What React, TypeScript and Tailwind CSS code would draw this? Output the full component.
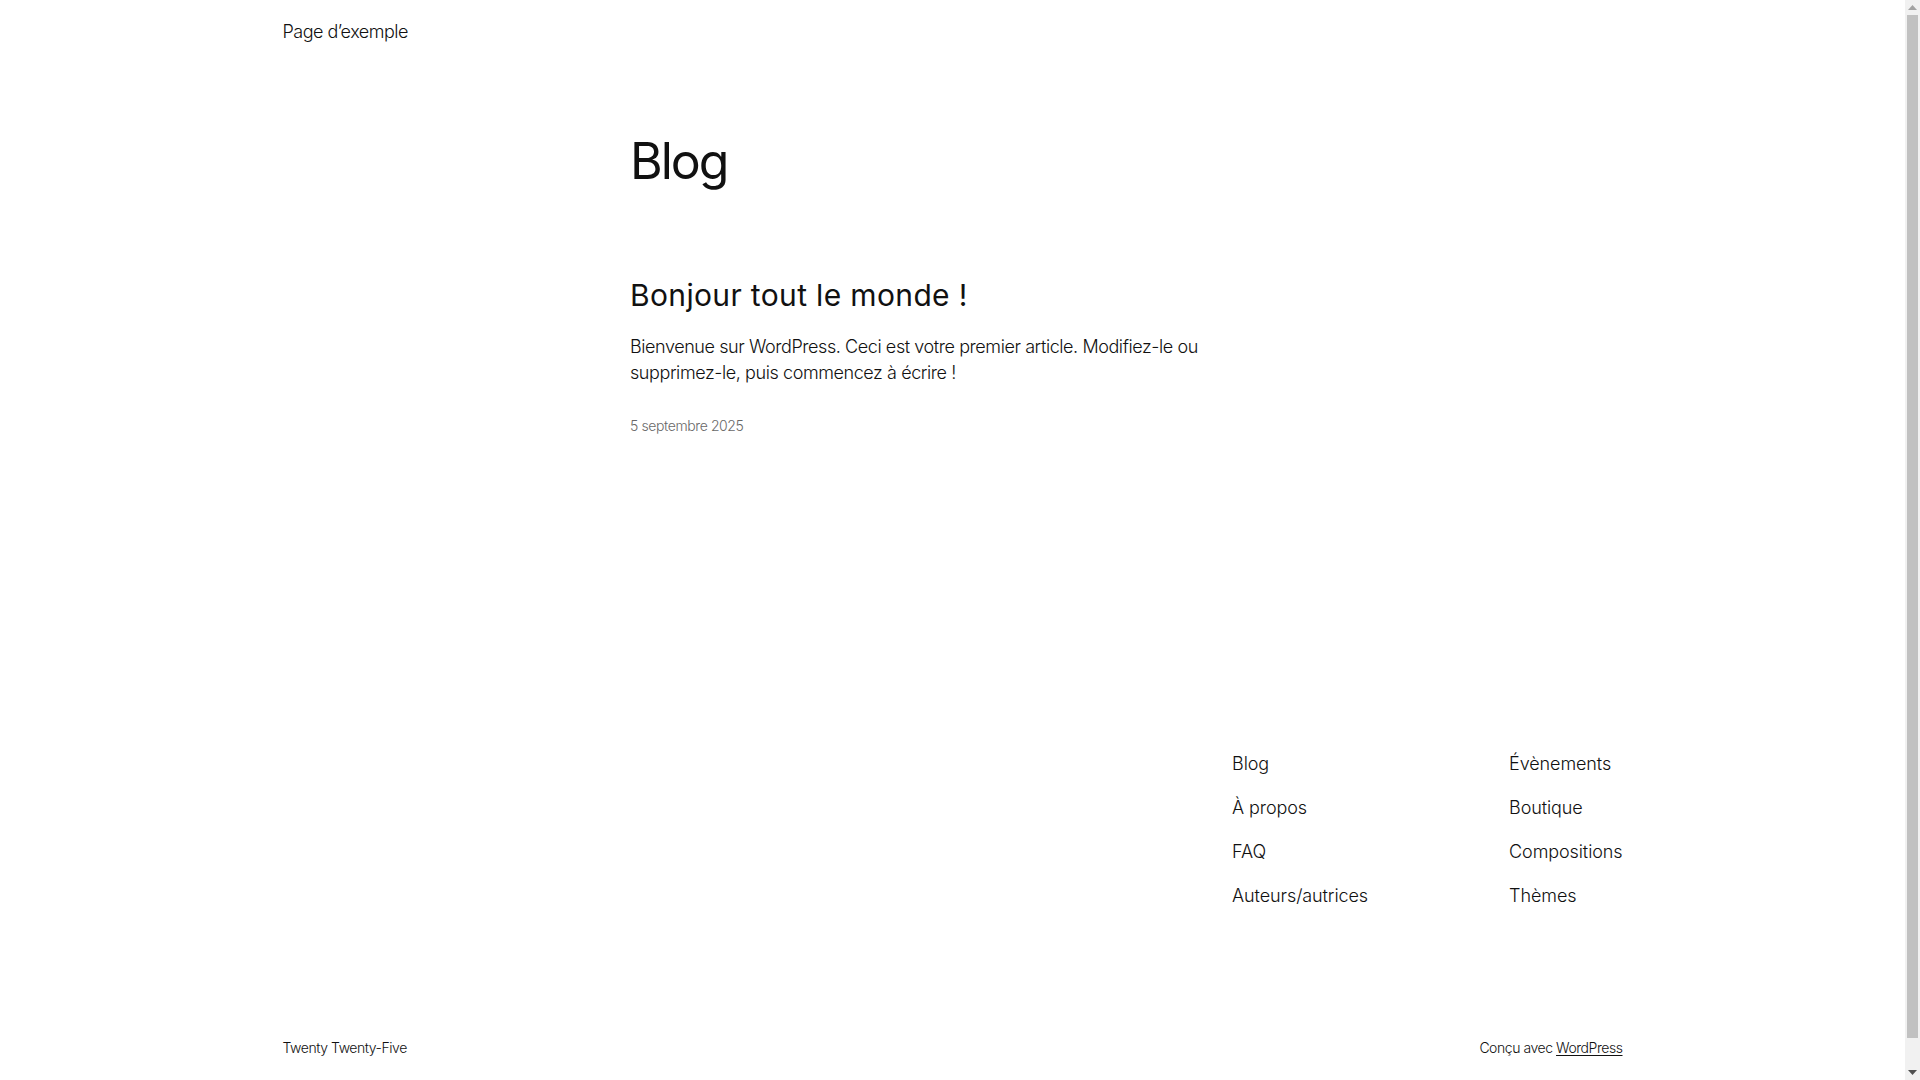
function Scrollbar() {
  return (
    <div className="w-[15px] shrink-0 h-full bg-[#f1f1f1] flex flex-col">
      <div className="h-[15px] flex items-center justify-center">
        <svg width="9" height="5" viewBox="0 0 9 5">
          <path d="M0 5 L4.5 0 L9 5 Z" fill="#a3a3a3" />
        </svg>
      </div>
      <div className="flex-1 flex flex-col px-[2px]">
        <div className="h-[1023px] bg-[#c1c1c1]" />
      </div>
      <div className="h-[15px] flex items-center justify-center">
        <svg width="9" height="5" viewBox="0 0 9 5">
          <path d="M0 0 L9 0 L4.5 5 Z" fill="#505050" />
        </svg>
      </div>
    </div>
  );
}

export default function App() {
  return (
    <div className="h-screen overflow-hidden flex bg-white">
      <div className="flex-1 min-w-0 text-[#111111] font-['Inter','Liberation_Sans',sans-serif] font-light">
        <header className="max-w-[1340px] mx-auto h-[64px] flex items-center">
          <a href="#" className="text-[18px] leading-[26px] tracking-[-0.5px]">
            Page d’exemple
          </a>
        </header>

        <main className="max-w-[645px] mx-auto pt-[67px]">
          <h1 className="text-[50px] leading-[60px] font-normal tracking-[-2px]">Blog</h1>

          <article className="mt-[86px]">
            <h2 className="text-[30px] leading-[36px] font-normal tracking-[0.35px]">
              Bonjour tout le monde !
            </h2>
            <p className="mt-[21px] text-[18px] leading-[26px] tracking-[-0.42px]">
              Bienvenue sur WordPress. Ceci est votre premier article. Modifiez-le ou supprimez-le, puis
              commencez à écrire !
            </p>
            <p className="mt-[30px] text-[14px] leading-[20px] text-[#686868] tracking-[-0.4px]">
              5 septembre 2025
            </p>
          </article>
        </main>

        <footer className="max-w-[1340px] mx-auto mt-[315px]">
          <nav className="flex justify-end text-[18px] leading-[26px] tracking-[-0.1px]">
            <ul className="w-[277px] flex flex-col gap-[18px]">
              <li><a href="#">Blog</a></li>
              <li><a href="#">À propos</a></li>
              <li><a href="#">FAQ</a></li>
              <li><a href="#">Auteurs/autrices</a></li>
            </ul>
            <ul className="flex flex-col gap-[18px]">
              <li><a href="#">Évènements</a></li>
              <li><a href="#">Boutique</a></li>
              <li><a href="#">Compositions</a></li>
              <li><a href="#">Thèmes</a></li>
            </ul>
          </nav>

          <div className="mt-[129px] flex justify-between text-[14px] leading-[20px] tracking-[-0.45px]">
            <p>Twenty Twenty-Five</p>
            <p>
              Conçu avec{" "}
              <a href="#" className="underline underline-offset-2">
                WordPress
              </a>
            </p>
          </div>
        </footer>
      </div>
      <Scrollbar />
    </div>
  );
}
